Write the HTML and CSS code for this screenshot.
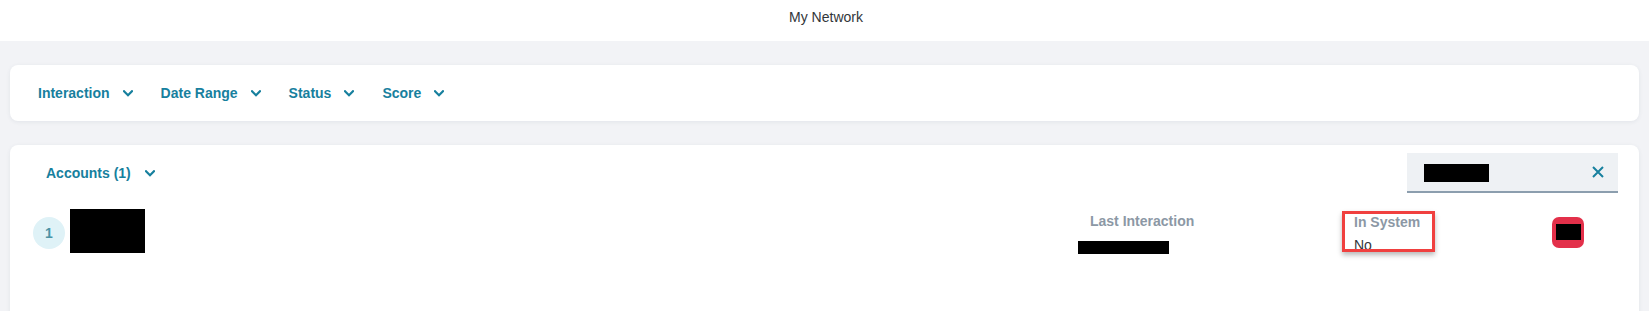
FILE: index.html
```html
<!DOCTYPE html>
<html lang="en">
<head>
<meta charset="utf-8">
<title>My Network</title>
<link rel="stylesheet" href="styles.css">
</head>
<body>
  <header class="topbar">My Network</header>

  <section class="card filters">
    <button class="filter">Interaction <svg class="chev" viewBox="0 0 10 7"><polyline points="1,1.2 5,5.2 9,1.2"/></svg></button>
    <button class="filter">Date Range <svg class="chev" viewBox="0 0 10 7"><polyline points="1,1.2 5,5.2 9,1.2"/></svg></button>
    <button class="filter">Status <svg class="chev" viewBox="0 0 10 7"><polyline points="1,1.2 5,5.2 9,1.2"/></svg></button>
    <button class="filter">Score <svg class="chev" viewBox="0 0 10 7"><polyline points="1,1.2 5,5.2 9,1.2"/></svg></button>
  </section>

  <section class="card accounts">
    <div class="acc-head">
      <button class="filter acc-title">Accounts (1) <svg class="chev" viewBox="0 0 10 7"><polyline points="1,1.2 5,5.2 9,1.2"/></svg></button>
      <div class="search">
        <span class="redact search-redact"></span>
        <svg class="clear" viewBox="0 0 12 12"><path d="M1 1 L11 11 M11 1 L1 11"/></svg>
      </div>
    </div>

    <div class="row">
      <span class="index">1</span>
      <span class="redact name-redact"></span>
      <span class="spacer"></span>
      <div class="col last">
        <span class="label last-label">Last Interaction</span>
        <span class="redact date-redact"></span>
      </div>
      <div class="col insys">
        <span class="label">In System</span>
        <span class="value">No</span>
      </div>
      <button class="action"><span class="redact action-redact"></span></button>
    </div>
  </section>
</body>
</html>
```

FILE: styles.css
```css
*, *::before, *::after { box-sizing: border-box; }

html, body {
  margin: 0;
  padding: 0;
}

body {
  background: #f2f3f6;
  font-family: "Liberation Sans", Arial, sans-serif;
  color: #32363a;
  height: 311px;
  overflow: hidden;
}

.topbar {
  height: 41px;
  background: #ffffff;
  text-align: center;
  font-size: 14px;
  line-height: 18px;
  padding-top: 8px;
  padding-left: 3px;
  color: #32363a;
}

.card {
  background: #ffffff;
  border-radius: 8px;
  box-shadow: 0 1px 4px rgba(40, 60, 90, 0.08);
  margin: 0 10px;
}

.filters {
  margin-top: 24px;
  height: 56px;
  display: flex;
  align-items: center;
  padding-left: 28px;
  gap: 28px;
}

.filter {
  border: 0;
  background: none;
  padding: 0;
  font-family: inherit;
  font-size: 14px;
  font-weight: 700;
  line-height: 17px;
  color: #17809e;
  display: flex;
  align-items: center;
  gap: 13px;
  cursor: pointer;
}

.chev {
  width: 10px;
  height: 7px;
  fill: none;
  stroke: #17809e;
  stroke-width: 2.2;
  stroke-linecap: square;
}

.accounts {
  margin-top: 24px;
  height: 200px;
  padding: 8px 55px 0 23px;
}

.acc-head {
  display: flex;
  align-items: center;
  justify-content: space-between;
  margin-right: -34px;
}

.acc-title {
  margin-left: 13px;
  gap: 14px;
}

.search {
  width: 211px;
  height: 40px;
  background: #eef1f4;
  border-bottom: 2px solid #8c9eae;
  display: flex;
  align-items: center;
  justify-content: space-between;
  padding: 0 14px 0 17px;
}

.redact {
  display: block;
  background: #000000;
}

.search-redact {
  width: 65px;
  height: 18px;
  margin-top: 1px;
}

.clear {
  width: 12px;
  height: 12px;
  fill: none;
  stroke: #17809e;
  stroke-width: 2;
}

.row {
  display: flex;
  align-items: flex-start;
  margin-top: 16px;
}

.index {
  width: 32px;
  height: 32px;
  margin-top: 8px;
  border-radius: 50%;
  background: #dff2f7;
  color: #4b93a5;
  font-weight: 700;
  font-size: 14px;
  display: flex;
  align-items: center;
  justify-content: center;
}

.name-redact {
  width: 75px;
  height: 44px;
  margin-left: 5px;
}

.spacer { flex: 1; }

.col {
  display: flex;
  flex-direction: column;
  align-items: flex-start;
}

.label {
  font-size: 14px;
  font-weight: 700;
  line-height: 17px;
  color: #8c98a5;
}

.last {
  width: 276px;
  margin-top: 4px;
}

.last-label { padding-left: 12px; }

.date-redact {
  width: 91px;
  height: 13px;
  margin-top: 11px;
}

.insys {
  width: 198px;
  margin-top: 5px;
  position: relative;
}

.value {
  font-size: 14px;
  line-height: 17px;
  margin-top: 6px;
  color: #32363a;
}

.insys::after {
  content: "";
  position: absolute;
  left: -12px;
  top: -3px;
  width: 93px;
  height: 41px;
  border: 3px solid #f0403f;
  box-shadow: 0 3px 5px rgba(0, 0, 0, 0.28);
}

.action {
  width: 32px;
  height: 31px;
  margin-top: 8px;
  border: 0;
  border-radius: 7px;
  background: #e3304a;
  padding: 7px 0 0 4px;
  display: flex;
  align-items: flex-start;
}

.action-redact {
  width: 25px;
  height: 16px;
}
```
